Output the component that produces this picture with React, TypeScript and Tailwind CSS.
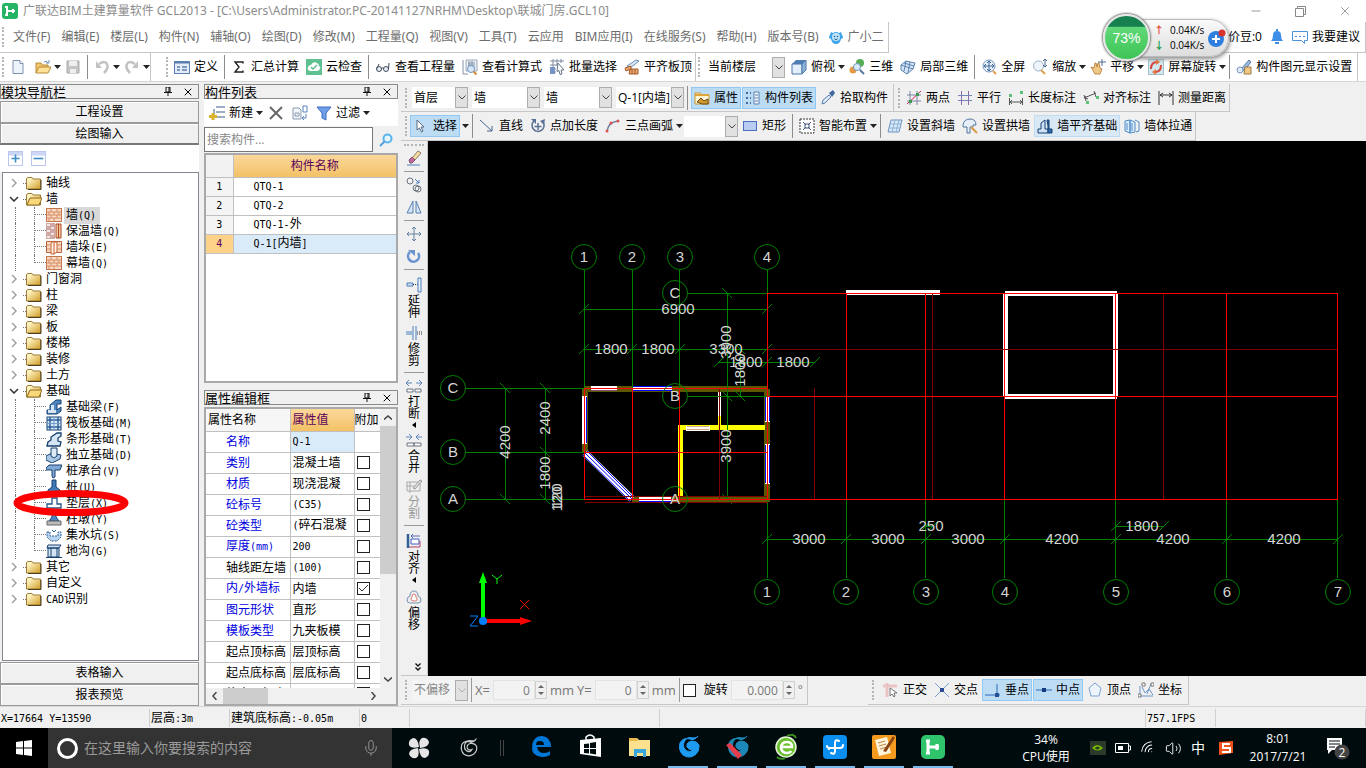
import { useState, type ReactNode } from "react";
import { Mic, Minus, X, Wifi, Volume2 } from "lucide-react";

const BLUE = "#4a7ebb";
const GRAY = "#6b7480";

// 16x16 toolbar drawings
const ICONS: Record<string, ReactNode> = {
  newFile: (
    <>
      <path d="M3 1.5h7l3 3v10H3z" fill="#eef4fb" stroke="#7f93ad" />
      <path d="M10 1.5v3h3" fill="#fff" stroke="#7f93ad" />
    </>
  ),
  open: (
    <>
      <path d="M1 14V4h5l1 2h6v3" fill="#f3c76a" stroke="#b98a35" />
      <path d="M1 14l3-6h12l-3 6z" fill="#ffe19a" stroke="#b98a35" />
      <path d="M9 3q3-2 4 1m-2 0h3V1" fill="none" stroke="#6c8db9" />
    </>
  ),
  save: (
    <>
      <path d="M2 2h12v12H2z" fill="#c4c4c4" stroke="#aaa" />
      <path d="M4 2h8v5H4zM5 10h6v4H5z" fill="#eee" />
    </>
  ),
  undo: (
    <>
      <path d="M5 5q6-4 8 0t-3 9" fill="none" stroke="#c2c2c2" strokeWidth="2.500" />
      <path d="M2 2v7h6z" fill="#c2c2c2" />
    </>
  ),
  redo: (
    <>
      <path d="M11 5Q5 1 3 5t3 9" fill="none" stroke="#c2c2c2" strokeWidth="2.500" />
      <path d="M14 2v7H8z" fill="#c2c2c2" />
    </>
  ),
  define: (
    <>
      <rect x="0.5" y="2.5" width="15" height="12" fill="#e3ecf7" stroke="#5d7fb0" />
      <path d="M1 3.5h14" stroke="#5d7fb0" strokeWidth="2" />
      <path d="M3 8h3M3 11h3M8 8h5M8 11h5" stroke="#5d7fb0" strokeWidth="1.5" />
    </>
  ),
  sigma: <path d="M12 4.5V3H4l4 5-4 5h8v-1.5" fill="none" stroke="#222" strokeWidth="1.4" />,
  cloud: (
    <>
      <rect width="16" height="16" fill="#5fc191" />
      <path d="M4 12q-3-1-2-4 1-2 3-2 2-4 6-2 2 1 2 3 2 1 1 3-1 2-3 2z" fill="#fff" />
      <path d="M5 8l2 2 4-4" fill="none" stroke="#5fc191" strokeWidth="1.5" />
    </>
  ),
  glasses: (
    <g fill="#e8eef5" stroke="#444f5e">
      <circle cx="4" cy="10" r="2.5" />
      <circle cx="11" cy="10" r="2.5" />
      <path d="M6.5 9h2M1.5 10L4 5M13.5 10L14 4" fill="none" />
    </g>
  ),
  calc: (
    <>
      <path d="M4 1h11v11H4z" fill="#e9eef5" stroke="#9aa8ba" />
      <path d="M1 1v14h5M6 4h7M6 6h7M6 8h7M7 2v8M10 2v8" stroke="#8592a6" fill="none" />
      <circle cx="9" cy="10" r="3.5" fill="#d6e8f8" stroke="#6f96c4" />
      <path d="M11.5 12.5l3 3" stroke="#d58a33" strokeWidth="2" />
    </>
  ),
  batch: (
    <>
      <path d="M1 2h14M1 6h9M4 0v10M8 0v7M12 0v4M1 10h6M1 13h6" stroke="#7c8aa0" />
      <path d="M1 8h5v7H1z" fill="#7593c4" />
      <path d="M9 4l6 7h-3l1 4-2 .5-1-4-2 1z" fill="#fff" stroke="#68768b" />
    </>
  ),
  slab: (
    <>
      <path d="M3 7L12 1l3 1-9 7z" fill="#dbe8f7" stroke="#6e8db5" />
      <path d="M1 9l6-2v3l-5 2zM6 10h8v5H5z" fill="#e7a768" stroke="#a95d32" />
      <path d="M8 10v5M11 10v5" stroke="#a95d32" />
    </>
  ),
  cube: (
    <>
      <path d="M1 5l4-4h10l-4 4z" fill="#4f7fb5" />
      <path d="M1 5h10v10H1z" fill="#e3eefa" stroke="#4d79aa" />
      <path d="M11 5l4-4v10l-4 4z" fill="#8fb2d8" stroke="#4d79aa" />
    </>
  ),
  threeD: (
    <>
      <circle cx="4" cy="11" r="3.5" fill="#e79a45" />
      <circle cx="11" cy="4" r="4" fill="#57ad52" />
      <circle cx="8" cy="8" r="3.5" fill="#d7ebfa" stroke="#7598bd" />
      <path d="M11 11l4 4" stroke="#58779f" strokeWidth="2" />
    </>
  ),
  part3d: (
    <>
      <path d="M1 6l5-4 9 2-2 6-6 5-6-4z" fill="#d6e6f6" stroke="#5b83b0" />
      <path d="M6 2L4 12M10 3L8 14M1 6l12 4M4 4l10 3" stroke="#5b83b0" fill="none" />
    </>
  ),
  full: (
    <>
      <circle cx="8" cy="7" r="6" fill="#e6f0fb" stroke="#7593bb" />
      <path d="M8 2v10M3 7h10M6 4l2-2 2 2M6 10l2 2 2-2M5 5L3 7l2 2M11 5l2 2-2 2" fill="none" stroke="#43679a" />
      <path d="M12 12l3 3" stroke="#e0a04a" strokeWidth="2" />
    </>
  ),
  zoom: (
    <>
      <circle cx="6.5" cy="7" r="5" fill="#edf4fb" stroke="#9db2cc" />
      <path d="M9 11l4 4" stroke="#dca04b" strokeWidth="2" />
      <path d="M13 0v8M11 2l2-2 2 2M11 6l2 2 2-2" fill="none" stroke="#506a90" />
    </>
  ),
  pan: (
    <>
      <path d="M1 8l3 1 1-5h1l1 4 1-4h1l1 5 2 1-2 5H5z" fill="#f0c886" stroke="#b98a4a" />
      <path d="M12 0v7M8 3h8" stroke="#536b8f" />
    </>
  ),
  rotateView: (
    <>
      <rect x="0.5" y="0.5" width="15" height="15" fill="#d3e7ee" stroke="#9ec3cf" />
      <path d="M3 10Q3 3 9 3M13 6q0 7-6 7" fill="none" stroke="#d6483b" strokeWidth="2" />
      <path d="M8 0l4 3-4 3zM8 10l-4 3 4 3z" fill="#e8743c" />
    </>
  ),
  viewSet: (
    <>
      <path d="M5 10l8-9 2 2-7 9z" fill="#9bb9df" stroke="#5a7aa5" />
      <path d="M9 8h6v7H8z" fill="#f1c77f" stroke="#9a7b45" />
      <circle cx="4" cy="11" r="3" fill="#dcebf8" stroke="#7d97b8" />
    </>
  ),
  props: (
    <>
      <path d="M1 3h5l1 2h8v9H1z" fill="#fff3d2" stroke="#c9932f" />
      <path d="M1 5h14" stroke="#e0a63a" strokeWidth="2" />
      <path d="M3 12l4-4 3 3 4-2v5H8z" fill="#d79a2a" stroke="#5a4a20" />
    </>
  ),
  list: (
    <>
      <path d="M1 3h2M1 8h2M1 13h2M5 3h1M5 8h1M5 13h1" stroke="#466a9c" strokeWidth="2" />
      <path d="M9 2h5v12H9z" fill="#f4f8fd" stroke="#5b7fb1" />
      <path d="M10 5h3M10 8h3M10 11h3" stroke="#5b7fb1" />
    </>
  ),
  picker: (
    <>
      <path d="M2 14l1-4 6-5 2 2-6 6z" fill="#d9e8f8" stroke="#5f7fab" />
      <path d="M9 3l4-3 2 3-3 4z" fill="#3f68a0" />
    </>
  ),
  twoPt: (
    <>
      <path d="M4 1v14M11 1v14M1 5h14M1 11h14" stroke="#7f86a8" />
      <path d="M1 14L15 1" stroke="#c24" />
      <path d="M3 10h3v3H3zM10 3h3v3h-3z" fill="#3a9a50" />
    </>
  ),
  parallel: (
    <>
      <path d="M4.5 1v14M11.5 1v14" stroke="#8a6aa8" />
      <path d="M1 5.5h14M1 10.5h14" stroke="#7486b8" />
    </>
  ),
  lenDim: (
    <>
      <path d="M1.500 8v7M14.500 8v7M2 12h12M4 10l-2 2 2 2M12 10l2 2-2 2" stroke="#555" fill="none" />
      <path d="M1 4h3v3H1zM12 1h3v3h-3z" fill="#5fc07a" />
    </>
  ),
  alignDim: (
    <>
      <path d="M1 8L13 3M1 5l2 6M11 1l2 6M3 6L2 8l3 1" stroke="#555" fill="none" />
      <path d="M3 11h3v3H3zM13 6h3v3h-3z" fill="#5fc07a" />
    </>
  ),
  measure: <path d="M1 1v14M15 1v14M2 5h12M5 3L2 5l3 2M11 3l3 2-3 2" stroke="#333" fill="none" />,
  cursor: <path d="M4 2v10l2.500-2 2 4 1.500-1-2-4h3z" fill="#fff" stroke="#57687f" />,
  line: <path d="M1 2l12 11M13 8v5H8" stroke="#46648f" fill="none" />,
  ptLen: (
    <>
      <path d="M4 3a6 6 0 1 0 9 1M8 5v7M4.500 8.500h7" fill="none" stroke="#5a7196" strokeWidth="1.5" />
      <path d="M1 1h5v5zM15 1l-1 6-4-4z" fill="#5a7196" />
    </>
  ),
  arc: (
    <>
      <path d="M2 14Q3 4 13 3" fill="none" stroke="#6c7f9c" strokeWidth="1.5" />
      <circle cx="2" cy="13" r="1.5" fill="#d9534f" />
      <circle cx="6" cy="5" r="1.5" fill="#d9534f" />
      <circle cx="13" cy="3" r="1.5" fill="#d9534f" />
    </>
  ),
  rect: <rect x="1.5" y="3.5" width="13" height="9" fill="#b9cdf2" stroke="#4b6fc0" />,
  smart: (
    <>
      <rect x="1" y="1" width="14" height="14" fill="#fff" stroke="#333" strokeDasharray="2 1" />
      <path d="M4 4l3 3M12 4L9 7M4 12l3-3M12 12L9 9M5 7h2V5M11 7H9V5M5 9h2v2M11 9H9v2" fill="none" stroke="#44597c" />
    </>
  ),
  slope: (
    <>
      <path d="M4 2h11l-3 12H1z" fill="#d9e9f8" stroke="#6a93c2" />
      <path d="M3 6h11M2 10h11M8 2L5 14M12 2L9 14" stroke="#8fb0d6" />
    </>
  ),
  arch: (
    <>
      <path d="M1 7q1-6 7-6t6 6h-3v2H8v6H5V9H1z" fill="#e6eef8" stroke="#55779f" />
      <path d="M9 9l6 6" stroke="#d99b4b" strokeWidth="2" />
    </>
  ),
  alignBase: (
    <>
      <path d="M1 15v-4h3V5l4-3v9h3v4z" fill="#cfe1f4" stroke="#173f73" />
      <path d="M10 2h2v9h3v4h-4V8z" fill="#2f6bab" stroke="#173f73" />
    </>
  ),
  through: (
    <>
      <path d="M1 3l5-1v13l-5-2zM6 2l5 2v10l-5 1z" fill="#dcebfa" stroke="#4f8cc7" />
      <path d="M11 2l4 2v9l-3 1M3 5v7M8 5v8" stroke="#4f8cc7" fill="none" />
    </>
  ),
  eraser: (
    <>
      <path d="M6 8l6-7 3 2-6 7z" fill="#f6dca2" stroke="#8b7a63" />
      <path d="M3 10l3-3 3 3-3 3H4z" fill="#c46a9a" stroke="#7a4f70" />
      <path d="M1 15h13" stroke={BLUE} />
    </>
  ),
  copy: (
    <g fill="none" stroke={GRAY}>
      <circle cx="4" cy="4" r="3" />
      <circle cx="10" cy="11" r="3" />
      <circle cx="12" cy="12" r="3" />
      <path d="M9 2l4 4M13 3v3h-3" stroke={BLUE} />
    </g>
  ),
  mirror: <path d="M7 2v12H1zM10 2v12h5z" fill="#d8e6f6" stroke="#5580b3" />,
  move: <path d="M8 1v14M1 8h14M6 3l2-2 2 2M6 13l2 2 2-2M3 6L1 8l2 2M13 6l2 2-2 2" fill="none" stroke="#66809f" />,
  rotate: (
    <>
      <path d="M4 4a5.500 5.500 0 1 0 8 1" fill="none" stroke="#6a94d0" strokeWidth="2.5" />
      <path d="M2 2h7v6z" fill="#6a94d0" />
    </>
  ),
  extend: (
    <>
      <path d="M1 6h6v3H1z" fill="#cfe0f3" stroke={BLUE} />
      <path d="M7 7.500h5" stroke="#333" strokeDasharray="1 1" />
      <path d="M12 1h3v14h-3z" fill="#e8f1fb" stroke={BLUE} />
    </>
  ),
  trim: (
    <>
      <path d="M0 7h6M0 9h6M7 1v14M10 1v14" stroke={BLUE} />
      <path d="M11 7h5M11 9h5" stroke="#333" strokeDasharray="1 1" />
    </>
  ),
  breakOp: (
    <>
      <path d="M0 5h6M3 2L0 5l3 3M16 5h-6M13 2l3 3-3 3" stroke="#5f86bb" fill="none" />
      <path d="M1 11h6v3H1zM9 11h6v3H9z" fill="#fff" stroke={GRAY} />
    </>
  ),
  merge: (
    <>
      <path d="M0 5h6M3 2l3 3-3 3M16 5h-6M13 2l-3 3 3 3" stroke="#5f86bb" fill="none" />
      <path d="M1 11h7v3H1zM8 11h7v3H8z" fill="#fff" stroke={GRAY} />
    </>
  ),
  split: (
    <>
      <path d="M1 4h13v9H1zM0 8h8M4 4v11" stroke="#aaa" fill="none" />
      <path d="M7 10l7-8 2 1-7 8z" fill="#ddd" stroke="#999" />
    </>
  ),
  align: (
    <>
      <path d="M2 1v14" stroke="#315f96" strokeWidth="2.5" />
      <path d="M5 6h8v5H5z" fill="#fff" stroke="#3c5fc0" />
      <path d="M3 14h11V8" fill="none" stroke="#b5436b" />
      <path d="M5 3h9M7 1L5 3l2 2" fill="none" stroke="#5a6ab8" />
    </>
  ),
  offset: (
    <>
      <path d="M1 11q0-3 3-4 0-5 4-5t4 5q3 1 3 4 0 3-3 3H4q-3 0-3-3z" fill="#e9edf2" stroke="#7e93ad" />
      <path d="M5 10q0-1 1-2 0-3 2-3t2 3q1 1 1 3-1 1-3 1-3 0-3-2z" fill="#fff" stroke="#e07a72" />
    </>
  ),
  ortho: (
    <>
      <path d="M0 4h14M4 1v14" stroke="#ecc3c3" strokeWidth="3" />
      <path d="M7 6v8l2-2 2 3 1-1-1-3h3z" fill="#fff" stroke="#777" />
    </>
  ),
  cross: (
    <>
      <path d="M1 1l14 14M15 1L1 15" stroke="#7aa3d8" />
      <path d="M6 6h4v4H6z" fill="#274f91" />
    </>
  ),
  perp: (
    <>
      <path d="M0 13h15M12 2v11" stroke="#5b8fd0" strokeWidth="1.5" />
      <path d="M10 11h4v4h-4z" fill="#274f91" />
    </>
  ),
  mid: (
    <>
      <path d="M0 8h16" stroke="#5b8fd0" strokeWidth="1.5" />
      <path d="M6 6h4v4H6z" fill="#173b80" />
    </>
  ),
  vertex: <path d="M8 1l6 5-2 8H4L2 6z" fill="#eef4fb" stroke="#7ba2d2" />,
  coord: (
    <>
      <path d="M2 4v10h13M4 5l3 6 4-4 4 6M13 2L9 12" fill="none" stroke="#6a95cb" />
      <path d="M0 12h3v3H0zM4 1h3v3H4zM13 1h3v3h-3z" fill="#fff" stroke="#777" />
    </>
  ),
  addItem: (
    <>
      <path d="M7 2h9M7 7h9M7 12h9M5 4v8" stroke="#7e95b5" strokeWidth="1.5" />
      <path d="M4 8v7M0 11.500h8" stroke="#d9b52e" strokeWidth="3" />
    </>
  ),
  del: <path d="M2 2l12 12M14 2L2 14" stroke="#666" strokeWidth="2" />,
  copyDoc: (
    <>
      <path d="M1 3h6l2 2v9H1z" fill="#f3f6fa" stroke="#8a9ab0" />
      <path d="M3 8h4v3H3z" fill="none" stroke="#8a9ab0" />
      <path d="M11 1h4v6h-4zM14 9v4h-3M12 11l-2 2 2 2" fill="none" stroke="#5980c0" />
    </>
  ),
  filter: <path d="M1 2h14l-5 6v7l-4-2V8z" fill="#6f9fe6" stroke="#3f6fc0" />,
  brick: (
    <>
      <rect x="0.5" y="1.5" width="15" height="13" fill="#f8d9c3" stroke="#c5764b" />
      <path d="M1 5h14M1 8h14M1 11h14M5 2v3M11 2v3M3 5v3M8 5v3M13 5v3M5 8v3M11 8v3M3 11v3M8 11v3" stroke="#d48b60" />
    </>
  ),
  insul: (
    <>
      <rect width="9" height="16" fill="#cfa9a6" />
      <path d="M1 2h3M5 5h3M1 8h3M5 11h3M1 14h3" stroke="#f2e4e4" strokeWidth="2" />
      <path d="M10 1h5v14h-5z" fill="#f3c7a6" stroke="#a84a20" />
      <path d="M12.500 1v14" stroke="#a84a20" />
    </>
  ),
  pier: (
    <>
      <path d="M.5 2.500h15v11H.5z" fill="#f8d9c3" stroke="#b9623a" />
      <path d="M5 4l3-2v13H5zM8 3h3v10l-3 2" fill="#fff3ea" stroke="#c5622d" />
      <path d="M1 6h4M1 10h4M11 6h4M11 10h4" stroke="#d48b60" />
    </>
  ),
  beam: (
    <>
      <path d="M1 15v-4h3V6l6-5h5v4h-4v6l4-3v4l-4 3z" fill="#4f86bf" stroke="#17406f" />
      <path d="M2 14v-3h3V6h3v5h2v3z" fill="#d6e6f5" />
    </>
  ),
  raft: (
    <>
      <rect x="1" y="2" width="14" height="13" fill="#d9e8f6" stroke="#17406f" />
      <path d="M4 2v13M12 2v13M1 5h14M1 12h14" stroke="#2b5f9a" strokeWidth="1.5" />
      <path d="M8 2v13M1 8.500h14" stroke="#6f9ac6" />
    </>
  ),
  strip: <path d="M1 15l1-4 3-2V6l6-4h4v3l-3 2v3l3 1-1 4z" fill="#d6e6f5" stroke="#17406f" strokeWidth="1.3" />,
  isolated: (
    <>
      <path d="M0 9l6-3 9 2-1 4-8 4-6-3z" fill="#a9c6e4" stroke="#17406f" />
      <path d="M5 9V1h6v8l-3 2z" fill="#dce9f6" stroke="#17406f" />
    </>
  ),
  cap: <path d="M0 5l3-3h13l-2 5H9v7l-2 1-1-2V7H0z" fill="#7fa9d4" stroke="#17406f" />,
  pile: <path d="M6 1h4v7l4 3v2l-6 2-6-2v-2l4-3z" fill="#3f7ab5" stroke="#17406f" />,
  cushion: <path d="M6 3h5v6h4v4H1V9h5z" fill="#fff" stroke="#235488" strokeWidth="1.3" />,
  colPier: (
    <>
      <path d="M6 1h4v5l3 4H3l3-4z" fill="#4f86bf" stroke="#17406f" />
      <path d="M1 10h14v4H1z" fill="#bbb" stroke="#666" />
    </>
  ),
  pit: (
    <>
      <path d="M1 5h3v4h8V5h3v5l-4 4H5l-4-4z" fill="#b9d5ef" stroke="#2c6099" strokeDasharray="2 1" />
      <path d="M6 3l2 2 2-2" fill="none" stroke="#2c6099" />
    </>
  ),
  trench: (
    <>
      <path d="M2 2h13l-2 3H1zM2 5h11v9H2z" fill="#d4e4f4" stroke="#17406f" />
      <path d="M5 5v9M11 5v9M0 14.500h16" stroke="#17406f" />
    </>
  ),
};

const Icon = ({ name }: { name: string }) => (
  <svg viewBox="0 0 16 16" className="size-4 shrink-0" aria-hidden="true">
    {ICONS[name]}
  </svg>
);

const Arrow = () => (
  <svg viewBox="0 0 7 4" className="ml-[3px] h-1 w-[7px] shrink-0" aria-hidden="true">
    <path d="M0 0h7L3.5 4z" fill="#222" />
  </svg>
);

const Grip = () => <span className="mx-0.5 h-5 w-0.5 shrink-0 border-l-2 border-dotted border-[#b5b5b5]" />;
const Sep = () => <span className="mx-0.5 h-6 w-px shrink-0 bg-[#8c8c8c]" />;

type ToolProps = { icon: string; label?: string; arrow?: boolean; active?: boolean; pale?: boolean };

function Tool({ icon, label, arrow, active, pale }: ToolProps) {
  const tone = active
    ? "border-[#90c8f6] bg-[#bcdcf4]"
    : pale
      ? "border-[#c0dcf3] bg-[#d8e8f5]"
      : "border-transparent";
  return (
    <>
      <button
        type="button"
        aria-label={label ?? icon}
        className={`flex h-[22px] shrink-0 items-center gap-1 whitespace-nowrap border pl-0.5 ${arrow && !active ? "pr-0 border-r-0" : "pr-0.5"} ${tone}`}
      >
        <Icon name={icon} />
        {label}
        {arrow && !active && <span className="-ml-1"><Arrow /></span>}
      </button>
      {arrow && active && <span className="-ml-0.5"><Arrow /></span>}
    </>
  );
}

// Latin runs in these panels use a half-width monospaced face
function Mono({ text }: { text: string }) {
  return (
    <>
      {text.split(/([\x20-\x7e]+)/).map((run, i) =>
        i % 2 ? (
          <span key={i} className="whitespace-pre font-[family-name:'DejaVu_Sans_Mono',monospace] text-[10px]">
            {run}
          </span>
        ) : (
          run
        ),
      )}
    </>
  );
}

function Combo({ value, label, width, disabled }: { value: string; label: string; width: string; disabled?: boolean }) {
  return (
    <span className={`flex h-[21px] shrink-0 ${width} ${disabled ? "bg-[#f4f4f4] text-[#888]" : "bg-white"}`}>
      <select
        aria-label={label}
        disabled={disabled}
        className="min-w-0 flex-1 appearance-none overflow-hidden bg-transparent pl-0.5 outline-none"
      >
        <option>{value}</option>
      </select>
      <span className="flex w-[13px] items-center justify-center border border-[#adadad] bg-[#e1e1e1]">
        <svg viewBox="0 0 8 5" className="h-[5px] w-2">
          <path d="M.5 .5L4 4 7.5 .5" fill="none" stroke={disabled ? "#aaa" : "#444"} />
        </svg>
      </span>
    </span>
  );
}

function Spin({ value, label, width }: { value: string; label: string; width: string }) {
  return (
    <span className="flex h-5 items-center">
      <input
        aria-label={label}
        defaultValue={value}
        disabled
        className={`h-5 border border-[#e3e3e3] bg-[#f3f3f3] pr-1 text-right text-[#777] ${width}`}
      />
      <span className="flex h-[18px] w-3 flex-col items-center justify-center gap-1 border border-[#d0d0d0]">
        <svg viewBox="0 0 6 3" className="h-[3px] w-1.5"><path d="M0 3h6L3 0z" fill="#666" /></svg>
        <svg viewBox="0 0 6 3" className="h-[3px] w-1.5"><path d="M0 0h6L3 3z" fill="#666" /></svg>
      </span>
    </span>
  );
}

function PanelHead({ title }: { title: string }) {
  return (
    <div className="flex h-[15px] shrink-0 items-center justify-between border border-[#8a8a8a] pr-1 text-[13px] leading-3 text-black">
      <h2>{title}</h2>
      <span className="flex items-center gap-2.5">
        <svg viewBox="0 0 8 9" className="h-[9px] w-2">
          <path d="M2 0h4v5H2zM0 5.500h8M4 6v3" fill="none" stroke="#111" />
          <path d="M5 0v5" stroke="#111" />
        </svg>
        <X className="size-3" strokeWidth={2} />
      </span>
    </div>
  );
}

const MENU = ["文件(F)", "编辑(E)", "楼层(L)", "构件(N)", "辅轴(O)", "绘图(D)", "修改(M)", "工程量(Q)", "视图(V)", "工具(T)", "云应用", "BIM应用(I)", "在线服务(S)", "帮助(H)", "版本号(B)"];

type Node = { name: string; children?: [string, string][] };

const TREE: Node[] = [
  { name: "轴线" },
  { name: "墙", children: [["brick", "墙(Q)"], ["insul", "保温墙(Q)"], ["pier", "墙垛(E)"], ["brick", "幕墙(Q)"]] },
  { name: "门窗洞" },
  { name: "柱" },
  { name: "梁" },
  { name: "板" },
  { name: "楼梯" },
  { name: "装修" },
  { name: "土方" },
  {
    name: "基础",
    children: [
      ["beam", "基础梁(F)"], ["raft", "筏板基础(M)"], ["strip", "条形基础(T)"], ["isolated", "独立基础(D)"], ["cap", "桩承台(V)"],
      ["pile", "桩(U)"], ["cushion", "垫层(X)"], ["colPier", "柱墩(Y)"], ["pit", "集水坑(S)"], ["trench", "地沟(G)"],
    ],
  },
  { name: "其它" },
  { name: "自定义" },
  { name: "CAD识别" },
];

function Folder({ open }: { open?: boolean }) {
  return (
    <svg viewBox="0 0 16 13" className="h-[13px] w-4 shrink-0">
      <defs>
        <linearGradient id="folderFill" x2="1" y2="1">
          <stop offset="0.2" stopColor="#fff3bf" />
          <stop offset="1" stopColor="#cf9a22" />
        </linearGradient>
      </defs>
      <path d="M.5 12V1.500L2 .5h4l1 1.500h7.500v10z" fill="url(#folderFill)" stroke="#9c7b35" />
      {open ? (
        <path d="M1 12l3-7h12l-3 7z" fill="#f8d878" stroke="#8f6e27" />
      ) : (
        <path d="M2 12.500h13V3" fill="none" stroke="#4d3f20" />
      )}
    </svg>
  );
}

function Tree() {
  return (
    <ul className="ml-0.5 min-h-0 flex-1 overflow-hidden border border-[#828790] bg-white pt-0.5 leading-4">
      {TREE.map((node) => (
        <li key={node.name}>
          <div className="flex h-4 items-center">
            <span className="flex w-[20px] justify-end pr-0.5">
              {node.children ? (
                <svg viewBox="0 0 10 6" className="mr-0.5 h-1.5 w-2.5"><path d="M1 1l4 4 4-4" fill="none" stroke="#333" strokeWidth="1.5" /></svg>
              ) : (
                <svg viewBox="0 0 6 10" className="mr-1 h-2.5 w-1.5"><path d="M1 1l4 4-4 4" fill="none" stroke="#a0a0a0" strokeWidth="1.5" /></svg>
              )}
            </span>
            <span className="w-[3px] border-t border-dotted border-[#777]" />
            <Folder open={!!node.children} />
            <span className="pl-1"><Mono text={node.name} /></span>
          </div>
          {node.children?.map(([icon, name], i, all) => (
            <div key={name} className="relative flex h-4 items-center">
              <span className="w-3 shrink-0" />
              <span className="h-4 w-[19px] shrink-0 border-l border-dotted border-[#777]" />
              <span className={`w-3 shrink-0 self-start border-l border-dotted border-[#777] ${i === all.length - 1 ? "h-2" : "h-4"}`}>
                <span className="block h-2 border-b border-dotted border-[#777]" />
              </span>
              <Icon name={icon} />
              <span className={`ml-0.5 pl-0.5 pr-1 ${name === "墙(Q)" ? "bg-[#d9d9d9]" : ""}`}>
                <Mono text={name} />
              </span>
              {name === "垫层(X)" && (
                <svg viewBox="0 0 116 28" className="absolute -top-1.5 left-2.5 z-10 h-7 w-[116px]">
                  <ellipse cx="58" cy="14" rx="54" ry="9.5" fill="none" stroke="red" strokeWidth="7" />
                </svg>
              )}
            </div>
          ))}
        </li>
      ))}
    </ul>
  );
}

const NAV_BTN = "h-[22px] shrink-0 border border-[#9a9a9a] bg-[#f0f0f0] leading-4 text-black shadow-[inset_1px_1px_0_#fff]";

function ModulePanel() {
  return (
    <aside className="flex w-[199px] shrink-0 flex-col">
      <PanelHead title="模块导航栏" />
      <nav className="mt-0.5 flex min-h-0 flex-1 flex-col">
        <button type="button" className={NAV_BTN}>工程设置</button>
        <button type="button" className={`${NAV_BTN} border-b-2 border-b-[#777]`}>绘图输入</button>
        <div className="flex h-[27px] shrink-0 items-center gap-2 bg-white pl-2">
          {["M3 8h10M8 3v10", "M2 8h12"].map((d) => (
            <button type="button" key={d} aria-label="展开折叠" className="size-[15px] border border-[#b9c6ee] bg-[linear-gradient(#ccd6f7_25%,#fff_30%)]">
              <svg viewBox="0 0 16 16"><path d={d} stroke="#3d8cc4" strokeWidth="2" /></svg>
            </button>
          ))}
        </div>
        <Tree />
        <button type="button" className={`${NAV_BTN} mt-px`}>表格输入</button>
        <button type="button" className={NAV_BTN}>报表预览</button>
      </nav>
    </aside>
  );
}

const PARTS = ["QTQ-1", "QTQ-2", "QTQ-1-外", "Q-1[内墙]"];

const PROPS: [string, string, boolean][] = [
  ["名称", "Q-1", true],
  ["类别", "混凝土墙", true],
  ["材质", "现浇混凝", true],
  ["砼标号", "(C35)", true],
  ["砼类型", "(碎石混凝", true],
  ["厚度(mm)", "200", true],
  ["轴线距左墙", "(100)", false],
  ["内/外墙标", "内墙", true],
  ["图元形状", "直形", true],
  ["模板类型", "九夹板模", true],
  ["起点顶标高", "层顶标高", false],
  ["起点底标高", "层底标高", false],
  ["终点顶标高", "", false],
];

function PartPanel() {
  const [picked, setPicked] = useState(3);
  const [checked, setChecked] = useState<Record<string, boolean>>({ "内/外墙标": true });
  return (
    <aside className="flex w-[194px] shrink-0 flex-col">
      <PanelHead title="构件列表" />
      <div className="flex h-[27px] shrink-0 items-center gap-0.5 bg-white pl-0.5">
        <Tool icon="addItem" label="新建" arrow />
        <Tool icon="del" />
        <Tool icon="copyDoc" />
        <Tool icon="filter" label="过滤" arrow />
      </div>
      <div className="flex h-[27px] shrink-0 items-center">
        <input aria-label="搜索构件" placeholder="搜索构件..." className="h-[25px] w-[169px] border border-[#777] bg-white px-0.5 text-[12px] placeholder:text-[#888]" />
        <button type="button" aria-label="搜索" className="flex flex-1 justify-center">
          <svg viewBox="0 0 14 14" className="size-3.5">
            <circle cx="8.5" cy="5.5" r="4" fill="#e8f6ff" stroke="#58b4ee" strokeWidth="2" />
            <path d="M5.500 8.500L1 13" stroke="#58a0d8" strokeWidth="2" />
          </svg>
        </button>
      </div>
      <div className="h-[230px] shrink-0 border-2 border-[#a9a9a9] bg-white">
        <table className="w-full border-collapse">
          <thead>
            <tr className="h-[22px]">
              <th className="w-[27px] border-b border-r border-[#c0c0c0] bg-[#f2f2f2]" />
              <th className="border-b border-[#c0c0c0] bg-[linear-gradient(#fad79a,#f3c165)] font-normal text-[#5b005b]">构件名称</th>
            </tr>
          </thead>
          <tbody>
            {PARTS.map((part, i) => (
              <tr key={part} onClick={() => setPicked(i)} className="h-[19px]">
                <td className={`border-b border-r border-[#c0c0c0] text-center leading-4 ${i === picked ? "bg-[#fdd38a] text-[#5b005b]" : "bg-[#f4f4f4]"}`}>
                  <Mono text={String(i + 1)} />
                </td>
                <td className={`border-b border-[#c0c0c0] pl-5 leading-4 ${i === picked ? "bg-[#d9eaf8]" : ""}`}>
                  <Mono text={part} />
                </td>
              </tr>
            ))}
          </tbody>
        </table>
      </div>
      <div className="mt-[7px] flex min-h-0 flex-1 flex-col">
        <PanelHead title="属性编辑框" />
        <div className="mt-0.5 flex min-h-0 flex-1 flex-col border-2 border-[#a9a9a9] bg-white">
          <div className="flex min-h-0 flex-1">
            <div className="min-w-0 flex-1 overflow-hidden">
              <table className="w-full table-fixed border-collapse whitespace-nowrap">
                <thead>
                  <tr className="h-[22px] text-left">
                    <th className="w-[84px] border-b border-r border-[#c0c0c0] bg-[#f6f6f6] pl-0.5 font-normal">属性名称</th>
                    <th className="w-[64px] border-b border-r border-[#c0c0c0] bg-[linear-gradient(#fad79a,#f3c165)] pl-0.5 font-normal text-[#5b005b]">属性值</th>
                    <th className="overflow-hidden border-b border-[#c0c0c0] bg-[#f6f6f6] font-normal">附加</th>
                  </tr>
                </thead>
                <tbody>
                  {PROPS.map(([name, value, blue]) => (
                    <tr key={name} className="h-[21px]">
                      <td className={`border-b border-r border-[#c0c0c0] pl-5 leading-4 ${blue ? "text-[#0000e0]" : ""}`}>
                        <Mono text={name} />
                      </td>
                      <td className={`border-b border-r border-[#c0c0c0] pl-0.5 leading-4 ${name === "名称" ? "bg-[#d9eaf8]" : ""}`}>
                        <Mono text={value} />
                      </td>
                      <td className="border-b border-[#c0c0c0] pl-0.5">
                        {name !== "名称" && (
                          <label className="block size-[13px] border border-[#222] bg-white">
                            <input
                              type="checkbox"
                              aria-label={name}
                              checked={!!checked[name]}
                              onChange={(e) => setChecked({ ...checked, [name]: e.target.checked })}
                              className="peer sr-only"
                            />
                            <svg viewBox="0 0 11 11" className="hidden size-[11px] peer-checked:block">
                              <path d="M1 5l3 3 6-6" fill="none" stroke="#333" />
                            </svg>
                          </label>
                        )}
                      </td>
                    </tr>
                  ))}
                </tbody>
              </table>
            </div>
            <div className="flex w-4 flex-col items-center bg-[#f0f0f0]">
              <svg viewBox="0 0 8 5" className="my-1.5 h-[5px] w-2"><path d="M0 4.500L4 1l4 3.500" fill="none" stroke="#444" strokeWidth="1.5" /></svg>
              <span className="h-[148px] w-4 bg-[#cdcdcd]" />
              <svg viewBox="0 0 8 5" className="mt-auto mb-1.5 h-[5px] w-2"><path d="M0 .5L4 4 8 .5" fill="none" stroke="#444" strokeWidth="1.5" /></svg>
            </div>
          </div>
          <div className="flex h-4 shrink-0 items-center bg-[#f0f0f0] pr-5">
            <svg viewBox="0 0 5 8" className="mx-1.5 h-2 w-[5px]"><path d="M4.500 0L1 4l3.500 4" fill="none" stroke="#444" strokeWidth="1.5" /></svg>
            <span className="h-4 w-[45px] bg-[#cdcdcd]" />
            <svg viewBox="0 0 5 8" className="ml-auto h-2 w-[5px]"><path d="M.5 0L4 4 .5 8" fill="none" stroke="#444" strokeWidth="1.5" /></svg>
          </div>
        </div>
      </div>
    </aside>
  );
}

function SideTool({ icon, label, arrow, muted }: { icon: string; label?: string; arrow?: boolean; muted?: boolean }) {
  return (
    <button type="button" aria-label={label ?? icon} className={`flex w-full flex-col items-center ${muted ? "text-[#999]" : ""}`}>
      <Icon name={icon} />
      {label && (
        <span className="mt-0.5 w-3 text-[12px] leading-3 break-all">{label}</span>
      )}
      {arrow && <svg viewBox="0 0 4 6" className="mt-0.5 h-1.5 w-1"><path d="M4 0v6L0 3z" /></svg>}
    </button>
  );
}

const SideSep = () => <span className="my-[5px] h-px w-5 shrink-0 bg-[#999]" />;

const Bubble = ({ x, y, t }: { x: number; y: number; t: string }) => (
  <g>
    <circle cx={x} cy={y} r="12.5" fill="none" stroke="#008000" />
    <text x={x} y={y + 5} textAnchor="middle">{t}</text>
  </g>
);

const Dim = ({ x, y, t, up }: { x: number; y: number; t: string; up?: boolean }) => (
  <text x={x} y={y + 5} textAnchor="middle" transform={up ? `rotate(-90 ${x} ${y})` : undefined}>
    {t}
  </text>
);

// slash through each dimension end; "back" slashes lean the other way
const ticks = (points: number[][], back = false) =>
  points.map(([x, y]) => (back ? `M${x - 5} ${y - 5}l10 10` : `M${x - 5} ${y + 5}l10 -10`)).join("");

function Drawing() {
  return (
    <svg
      viewBox="428 141 938 535"
      preserveAspectRatio="xMinYMin meet"
      className="min-h-0 min-w-0 flex-1 bg-black font-[family-name:'Liberation_Sans',Arial,sans-serif] text-[15px]"
      fill="#d6d6d6"
    >
      <g shapeRendering="crispEdges" fill="none">
        {/* walls */}
        <path d="M584 388.500h184M585 388v64M767 389v113M632 499.500h136" stroke="#5c5800" strokeWidth="6" />
        <path d="M680 497v-69.500h85" stroke="#ff0" strokeWidth="5" />
        <path d="M719.500 392v34" stroke="#ff0" strokeWidth="3" />
        <path d="M591 388.500h26M633 388.500h39M584.500 396v48M767.500 396v26M767.500 444v40M639 499.500h32M686 428h24" stroke="#fff" strokeWidth="5" />
        <path d="M719.500 392v24" stroke="#fff" strokeWidth="3" />
        <path d="M633 386.500h39M633 390.500h39M586.500 397v46M765.500 397v24M769.500 397v24M765.500 445v38M769.500 445v38M639 501.500h32" stroke="#00f" />
        <path d="M591 390.500h26" stroke="#805080" />
        <path d="M687 426.500h22M687 429.500h22" stroke="#d9a878" />
        {/* green axes and dimension lines */}
        <path
          d="M584.500 270v230M632.500 270v119M679.500 270v119M767.500 270v308M466 388.500h119M466 452.500h119M466 499.500h214M688 293.500h80M688 396.500h80
             M584 309.500h184M584 349.500h184M719 362.500h96M727.500 293v207M740.500 349v48M505.500 388v112M545.500 388v112
             M846.500 499v79M925.500 499v79M1004.500 499v79M1115.500 499v79M1226.500 499v79M1337.500 499v79M767 539.500h571M1116 526.500h48M926 526.500h8"
          stroke="#008000"
        />
      </g>
      <path
        d={
          ticks([[584, 309], [767, 309], [584, 349], [632, 349], [680, 349], [767, 349], [719, 362], [767, 362], [815, 362], [767, 539], [846, 539], [926, 539], [1005, 539], [1116, 539], [1227, 539], [1338, 539], [1116, 526], [1164, 526], [926, 526], [933, 526]]) +
          ticks([[505, 388], [505, 499], [545, 388], [545, 452], [545, 499], [727, 293], [727, 396], [727, 499], [740, 349], [740, 396]], true)
        }
        stroke="#008000"
        fill="none"
      />
      <path d="M585 453l47 46" stroke="#fff" strokeWidth="7" />
      <path d="M587 451l46 46M583 455l47 46M585 453l47 46" stroke="#00f" />
      <g shapeRendering="crispEdges" fill="none">
        <path d="M846 292.500h94M1005 293.500h112M1005 396.500h112" stroke="#fff" strokeWidth="5" />
        <path d="M1005.500 293v104M1115.500 293v104" stroke="#fff" strokeWidth="5" />
        <path d="M719.500 388v112M814.500 388v112M932.500 293v207M1163.500 293v207M768 349.500h570M585 496.500h183M585 502.500h183" stroke="#800000" />
        <path
          d="M584.500 388.500h183M584.500 388v112M632.500 388v112M679.500 388v112M584 452.500h184M584 499.500h754M767.500 293v207M768 293.500h570M768 396.500h570
             M846.500 293v207M925.500 293v207M1004.500 293v207M1115.500 293v207M1226.500 293v207M1337.500 293v207"
          stroke="red"
        />
      </g>
      {["1", "2", "3", "4"].map((t, i) => <Bubble key={t} t={t} x={[584, 632, 680, 767][i]} y={257} />)}
      {["C", "B", "A"].map((t, i) => <Bubble key={t} t={t} x={453} y={[388, 452, 499][i]} />)}
      {["C", "B", "A"].map((t, i) => <Bubble key={t} t={t} x={675} y={[293, 396, 499][i]} />)}
      {["1", "2", "3", "4", "5", "6", "7"].map((t, i) => <Bubble key={t} t={t} x={[767, 846, 926, 1005, 1116, 1227, 1338][i]} y={592} />)}
      <Dim x={678} y={309} t="6900" />
      <Dim x={611} y={349} t="1800" />
      <Dim x={658} y={349} t="1800" />
      <Dim x={726} y={349} t="3300" />
      <Dim x={746} y={362} t="1800" />
      <Dim x={793} y={362} t="1800" />
      <Dim x={809} y={539} t="3000" />
      <Dim x={888} y={539} t="3000" />
      <Dim x={968} y={539} t="3000" />
      <Dim x={931} y={526} t="250" />
      <Dim x={1062} y={539} t="4200" />
      <Dim x={1142} y={526} t="1800" />
      <Dim x={1173} y={539} t="4200" />
      <Dim x={1284} y={539} t="4200" />
      <Dim x={726} y={342} t="3900" up />
      <Dim x={740} y={370} t="1800" up />
      <Dim x={726} y={446} t="3900" up />
      <Dim x={505} y={442} t="4200" up />
      <Dim x={545} y={418} t="2400" up />
      <Dim x={545} y={473} t="1800" up />
      <Dim x={557} y={496} t="120" up />
      <Dim x={557} y={499} t="120" up />
      {/* UCS marker */}
      <path d="M483 621v-40" stroke="#0f0" strokeWidth="4" />
      <path d="M479 583l4-11 4 11z" fill="#0f0" />
      <path d="M492 575l5 4 5-4M497 579v5" stroke="#0f0" fill="none" />
      <path d="M483 621h38" stroke="red" strokeWidth="4" />
      <path d="M520 617l12 4-12 4z" fill="red" />
      <path d="M520 600l9 9M529 600l-9 9" stroke="red" shapeRendering="crispEdges" />
      <path d="M470 616h8l-8 10h8" stroke="#0080ff" fill="none" />
      <circle cx="483" cy="621" r="4" fill="#0080ff" />
    </svg>
  );
}

const BAR = "flex shrink-0 items-center border-b border-r border-[#c6c6c6] pl-0.5";

function Workspace() {
  return (
    <main className="flex min-w-0 flex-1 flex-col">
      <div className="flex h-7 shrink-0">
        <div className={`${BAR} gap-px`}>
          <Grip />
          <span className="w-px" />
          <Combo label="楼层" value="首层" width="w-14" />
          <span className="w-0.5" />
          <Combo label="构件类别" value="墙" width="w-[68px]" />
          <span className="w-0.5" />
          <Combo label="构件类型" value="墙" width="w-[68px]" />
          <span className="w-0.5" />
          <Combo label="构件" value="Q-1[内墙]" width="w-[68px]" />
          <Sep />
          <Tool icon="props" label="属性" active />
          <Tool icon="list" label="构件列表" active />
          <Tool icon="picker" label="拾取构件" />
          <span className="w-px" />
        </div>
        <div className={`${BAR} gap-px`}>
          <Grip />
          <Tool icon="twoPt" label="两点" />
          <Tool icon="parallel" label="平行" />
          <Tool icon="lenDim" label="长度标注" />
          <Tool icon="alignDim" label="对齐标注" />
          <Tool icon="measure" label="测量距离" />
        </div>
      </div>
      <div className="flex h-[29px] shrink-0">
        <div className={`${BAR} gap-px`}>
          <Grip />
          <Tool icon="cursor" label="选择" active arrow />
          <Sep />
          <Tool icon="line" label="直线" />
          <Tool icon="ptLen" label="点加长度" />
          <Tool icon="arc" label="三点画弧" arrow />
          <Combo label="画弧方式" value="" width="w-[54px]" />
          <Tool icon="rect" label="矩形" />
          <Sep />
          <Tool icon="smart" label="智能布置" arrow />
          <Sep />
          <Tool icon="slope" label="设置斜墙" />
          <Tool icon="arch" label="设置拱墙" />
          <Tool icon="alignBase" label="墙平齐基础" pale />
          <Tool icon="through" label="墙体拉通" />
        </div>
      </div>
      <div className="flex min-h-0 flex-1">
        <div className="flex w-[27px] shrink-0 flex-col items-center border-b border-r border-[#c6c6c6] pt-[3px]">
          <span className="mb-1 w-5 border-t-2 border-dotted border-[#b5b5b5]" />
          <SideTool icon="eraser" />
          <SideSep />
          <div className="flex flex-col gap-1.5">
            <SideTool icon="copy" />
            <SideTool icon="mirror" />
          </div>
          <SideSep />
          <div className="flex flex-col gap-1.5">
            <SideTool icon="move" />
            <SideTool icon="rotate" />
          </div>
          <SideSep />
          <div className="mt-0.5 flex flex-col gap-1.5">
            <SideTool icon="extend" label="延伸" />
            <SideTool icon="trim" label="修剪" />
          </div>
          <SideSep />
          <div className="flex flex-col gap-1">
            <SideTool icon="breakOp" label="打断" arrow />
            <SideTool icon="merge" label="合并" />
            <SideTool icon="split" label="分割" muted />
          </div>
          <SideSep />
          <div className="mt-0.5 flex flex-col gap-1.5">
            <SideTool icon="align" label="对齐" arrow />
            <SideTool icon="offset" label="偏移" />
          </div>
          <svg viewBox="0 0 6 8" className="mt-auto mb-1 ml-2 h-2 w-1.5">
            <path d="M.5 .5L3 3 5.5 .5M.5 4.500L3 7l2.500-2.500" fill="none" stroke="#111" strokeWidth="1.3" />
          </svg>
        </div>
        <Drawing />
      </div>
      <div className="flex h-[30px] shrink-0 pb-px">
        <div className={`${BAR} gap-[3px] text-[#777]`}>
          <Grip />
          <Combo label="偏移方式" value="不偏移" width="w-14" disabled />
          <span className="h-6 w-px bg-[#999]" />
          <span className="text-[13px]">X=</span>
          <Spin label="X" value="0" width="w-[42px]" />
          <span className="text-[13px]">mm</span>
          <span className="text-[13px]">Y=</span>
          <Spin label="Y" value="0" width="w-[42px]" />
          <span className="text-[13px]">mm</span>
          <span className="h-6 w-px bg-[#999]" />
          <label className="flex items-center gap-2 text-black">
            <input type="checkbox" className="size-[13px] appearance-none border border-[#222] bg-white" />
            旋转
          </label>
          <Spin label="旋转角度" value="0.000" width="w-[52px]" />
          <span className="pr-1">°</span>
        </div>
        <div className={`${BAR} ml-15 gap-px`}>
          <Grip />
          <span className="w-0.5" />
          <Tool icon="ortho" label="正交" />
          <Tool icon="cross" label="交点" />
          <Tool icon="perp" label="垂点" active />
          <Tool icon="mid" label="中点" active />
          <Tool icon="vertex" label="顶点" />
          <Tool icon="coord" label="坐标" />
          <span className="w-0.5" />
        </div>
      </div>
    </main>
  );
}

// floating system monitor
function Monitor() {
  return (
    <div className="absolute right-[137px] top-[14px] z-20 flex items-center">
      <div className="z-10 flex size-[47px] items-center justify-center rounded-full border-2 border-[#e6e6e6] bg-[linear-gradient(#16804f_24%,#5fd879_26%,#3ec455)] font-[family-name:'Liberation_Sans',Arial,sans-serif] text-[14px] text-white shadow-[0_0_2px_1px_#777]">
        73%
      </div>
      <div className="-ml-6 flex h-[38px] w-[103px] items-center gap-1 rounded-r-full border border-[#bbb] bg-[linear-gradient(#fafafa,#ddd)] pl-[27px] text-[10px] leading-[15px] text-black shadow-[1px_2px_4px_#888]">
        <div>
          <p className="whitespace-nowrap"><span className="mr-1.5 font-bold text-[#e5533c]">↑</span>0.04K/s</p>
          <p className="whitespace-nowrap"><span className="mr-1.5 font-bold text-[#1d9a4a]">↓</span>0.04K/s</p>
        </div>
        <svg viewBox="0 0 18 18" className="size-[18px] shrink-0">
          <circle cx="8" cy="10" r="8" fill="#2f7fe0" />
          <path d="M8 6v8M4 10h8" stroke="#fff" strokeWidth="2" />
          <circle cx="14" cy="4" r="3.5" fill="#d8332f" />
        </svg>
      </div>
    </div>
  );
}

const G_SWIRL =
  "M24 4q-4 5-8 3Q9 5 6 11q-2 7 3 12 6 4 12 0 5-4 4-10-2-4-7-4-6 1-5 6 2 4 6 2-2 4-6 2-5-3-3-9 3-6 9-4 5 0 5-2z";

const TASKS: { label: string; run: boolean; art: ReactNode }[] = [
  { label: "Edge", run: false, art: <path d="M5 13q2-9 10-9 9 1 9 11H10q1 6 7 6 4 0 6-2v4q-3 2-8 2-10-1-10-9 0-6 6-8-2 3-2 5h8q0-4-4-4-4 0-7 4z" fill="#0078d7" /> },
  {
    label: "Store", run: false,
    art: <><path d="M4 8l21-2v19L4 22z" fill="#fff" /><path d="M10 8V5q4-4 8 0v3" fill="none" stroke="#fff" strokeWidth="1.5" /><path d="M8 12l5-.5v4.500H8zM14 11l6-1v6h-6zM8 17h5v4.500L8 21zM14 17h6v5.500l-6-1z" fill="#000b0e" /></>,
  },
  { label: "资源管理器", run: false, art: <><path d="M4 6h8l2 2h11v16H4z" fill="#fbe08d" /><path d="M4 6h8l1 3H4z" fill="#e9b949" /><path d="M9 25v-8h12v8h-3v-4h-6v4z" fill="#3ba6dd" /></> },
  { label: "G浏览器", run: true, art: <path d={G_SWIRL} fill="#1e9bf0" stroke="#1e9bf0" /> },
  { label: "G工具", run: true, art: <><path d={G_SWIRL} fill="#1c88b8" stroke="#1c88b8" /><path d="M3 13l4-2 12 12-4 4z" fill="#e63c4b" /></> },
  { label: "360浏览器", run: true, art: <><circle cx="14" cy="15" r="10" fill="#6cc02f" stroke="#e8f4dd" strokeWidth="1.5" /><path d="M9 15h11q0-5-5-5-6 0-6 6 1 5 6 5 3 0 4-2" fill="none" stroke="#fff" strokeWidth="2.5" /><path d="M15 4q7-3 9 2M5 25q3 3 8 1" fill="none" stroke="#3e9120" strokeWidth="2" /></> },
  { label: "云盘", run: true, art: <><rect x="2" y="3" width="24" height="24" rx="4" fill="#0a8ff0" /><path d="M18 9q-4-2-4 2v8q0 4-4 2M6 14q0 2 3 2h10q3 0 3-3M8 17q-1-1 1-1" fill="none" stroke="#fff" strokeWidth="2" strokeLinecap="round" /></> },
  { label: "记事本", run: true, art: <><rect x="2" y="3" width="24" height="24" rx="2" fill="#f39a1f" /><path d="M5 8l12-3 4 16-12 3z" fill="#fff5dc" /><path d="M8 11l7-2M9 14l7-2M10 17l7-2" stroke="#b98544" /><path d="M13 19L23 4l2 2-9 14z" fill="#8a4312" /></> },
  { label: "GCL2013", run: true, art: <><rect x="2" y="3" width="24" height="24" rx="5" fill="#2fc46c" /><path d="M9 9v12M9 15h11M18 12v6M7 9h4M7 21h4" stroke="#fff" strokeWidth="3" /></> },
];

function Taskbar() {
  return (
    <footer className="flex h-10 shrink-0 bg-[#000b0e] text-white">
      <button type="button" aria-label="开始" className="flex w-12 shrink-0 items-center justify-center bg-black">
        <svg viewBox="0 0 16 16" className="size-4" fill="#fff">
          <path d="M0 2l7-1v6.500H0zM8 1l8-1v7.500H8zM0 8.500h7V15l-7-1zM8 8.500h8V16l-8-1z" />
        </svg>
      </button>
      <label className="flex w-[344px] shrink-0 items-center bg-[#333] pl-[9px]">
        <span className="size-[21px] rounded-full border-[3px] border-white" />
        <input aria-label="搜索" placeholder="在这里输入你要搜索的内容" className="ml-1.5 min-w-0 flex-1 bg-transparent text-[14px] outline-none placeholder:text-[#9a9a9a]" />
        <Mic className="mr-3 size-[18px] text-[#999]" strokeWidth={1.2} />
      </label>
      <button type="button" aria-label="四叶" className="ml-0.5 flex w-[49px] shrink-0 items-center justify-center">
        <svg viewBox="0 0 22 22" className="size-[22px]" fill="#e6e6e6">
          <path d="M11 10Q3 12 1 8q-1-5 4-7 5 0 6 9z" />
          <path d="M12 11q-2-8 2-10 5-1 7 4 0 5-9 6z" />
          <path d="M11 12q8-2 10 2 1 5-4 7-5 0-6-9z" />
          <path d="M10 11q2 8-2 10-5 1-7-4 0-5 9-6z" />
        </svg>
      </button>
      <button type="button" aria-label="G" className="flex w-[49px] shrink-0 items-center justify-center">
        <svg viewBox="0 0 28 30" className="h-6 w-[22px]">
          <path d={G_SWIRL} fill="none" stroke="#ccc" strokeWidth="1.5" />
        </svg>
      </button>
      <span className="mx-2 my-3 w-1 shrink-0 border-x border-[#444]" />
      <span className="w-1" />
      {TASKS.map((t) => (
        <button key={t.label} type="button" aria-label={t.label} className="flex w-[49px] shrink-0 flex-col items-center justify-end">
          <svg viewBox="0 0 28 30" className="mb-1 h-[30px] w-7">{t.art}</svg>
          <span className={`h-0.5 w-10 ${t.run ? "bg-[#76b9ed]" : ""}`} />
        </button>
      ))}
      <div className="ml-auto flex shrink-0 items-center">
        <p className="w-16 text-center text-[12px] leading-[17px]">34%<br />CPU使用</p>
        <div className="ml-3 flex items-center gap-[9px]">
          <svg viewBox="0 0 16 14" className="h-3.5 w-4"><path d="M0 0h16v14H0z" fill="#2b3a2b" /><path d="M2 7q5-6 11 0-5 5-11 0zm3 0q2 3 5 0-2-3-5 0z" fill="#76b900" /></svg>
          <svg viewBox="0 0 16 10" className="h-2.5 w-4"><path d="M.5 .5h13v9H.5zM14 3h1.500v4H14" fill="none" stroke="#fff" /><path d="M3 3h5v4H3z" fill="#fff" /></svg>
          <Wifi className="size-4 -rotate-45" strokeWidth={1.5} />
          <Volume2 className="size-[17px]" strokeWidth={1.3} />
          <span className="text-[14px]">中</span>
          <svg viewBox="0 0 16 16" className="ml-1 size-4"><path d="M1 2l14-1v12L1 15z" fill="#f2521b" /><path d="M12 4H5v4h7v4H4" fill="none" stroke="#fff" strokeWidth="2" /></svg>
        </div>
        <p className="ml-3 mr-4 w-16 text-center text-[12px] leading-[18px]">8:01<br />2017/7/21</p>
        <svg viewBox="0 0 24 24" className="mr-4 size-6">
          <path d="M1 2h15v12H6l-4 4v-4H1z" fill="#fff" />
          <path d="M3 5h11M3 8h11M3 11h6" stroke="#000b0e" />
          <circle cx="16" cy="16" r="7.5" fill="#444" />
          <text x="16" y="20.5" textAnchor="middle" fill="#fff" fontSize="12">2</text>
        </svg>
      </div>
    </footer>
  );
}

export default function App() {
  return (
    <div className="relative flex h-screen flex-col overflow-hidden bg-[#f0f0f0] font-[family-name:'Open_Sans','Noto_Sans_CJK_SC',sans-serif] text-[12px] leading-4 text-black">
      <header className="flex h-[22px] shrink-0 items-center bg-white pl-0.5 font-[family-name:'Noto_Sans','Noto_Sans_CJK_SC',sans-serif] text-[#8c8c8c]">
        <svg viewBox="0 0 16 16" className="size-4">
          <rect width="16" height="16" rx="3" fill="#26b565" />
          <path d="M5 4v8M5 8h8M11 6v4M3 4h3M3 12h3" stroke="#fff" strokeWidth="2" />
        </svg>
        <h1 className="ml-[5px] whitespace-nowrap">广联达BIM土建算量软件 GCL2013 - [C:\Users\Administrator.PC-20141127NRHM\Desktop\联城门房.GCL10]</h1>
        <div className="ml-auto flex items-center gap-8 pr-3.5">
          <button type="button" aria-label="最小化"><Minus className="size-3.5" strokeWidth={1.5} /></button>
          <button type="button" aria-label="还原">
            <svg viewBox="0 0 11 11" className="size-[11px]"><path d="M.5 2.500h8v8h-8zM2.500 2.500v-2h8v8h-2" fill="none" stroke="#888" /></svg>
          </button>
          <button type="button" aria-label="关闭"><X className="size-3.5" strokeWidth={1.5} /></button>
        </div>
      </header>
      <div className="flex h-[31px] shrink-0 justify-between bg-white text-[#6d6d6d]">
        <nav className="flex items-center gap-[11px] border-b border-r border-[#c6c6c6] pr-1 font-[family-name:'Noto_Sans','Noto_Sans_CJK_SC',sans-serif]">
          <Grip />
          <span className="-mr-[15px]" />
          {MENU.map((m) => <button key={m} type="button" className="whitespace-nowrap">{m}</button>)}
          <button type="button" className="-ml-0.5 flex items-center gap-1 whitespace-nowrap">
            <svg viewBox="0 0 16 16" className="size-4">
              <path d="M3 3l2 1q3-2 6 0l2-1 1 3q1 1 1 3l-2 1q-1 5-5 5t-5-5L1 9q0-2 1-3z" fill="#3fa5ea" />
              <circle cx="8" cy="8" r="4" fill="#bfe4fb" />
              <circle cx="6.5" cy="7.5" r="0.8" fill="#1b5c93" />
              <circle cx="9.5" cy="7.5" r="0.8" fill="#1b5c93" />
              <path d="M6.500 10q1.500 1 3 0" stroke="#1b5c93" fill="none" />
            </svg>
            广小二
          </button>
        </nav>
        <div className="flex items-center border-b border-r border-[#c6c6c6] pr-[5px] text-black">
          <a href="#beans">造价豆:0</a>
          <svg viewBox="0 0 14 16" className="ml-2 h-4 w-3.5"><path d="M1 12q2-2 2-6 0-4 4-4t4 4q0 4 2 6z" fill="#3f8fe8" /><path d="M6 0h2v2H6zM5 13h4v2H5z" fill="#3f8fe8" /></svg>
          <svg viewBox="0 0 16 15" className="ml-2 h-[15px] w-4"><path d="M.5 1.500h15v9h-3v3l-3-3h-9z" fill="#fff" stroke="#4c91dd" /><path d="M3 6.500h10" stroke="#4c91dd" strokeDasharray="2 2" /></svg>
          <a href="#feedback" className="ml-1">我要建议</a>
        </div>
      </div>
      <div className="flex h-[29px] shrink-0 border-b border-[#d6d6d6] bg-white">
        <div className="flex items-center gap-px border-r border-[#c6c6c6]">
          <Grip />
          <Tool icon="newFile" />
          <span className="w-px" />
          <Tool icon="open" arrow />
          <Tool icon="save" />
          <Sep />
          <Tool icon="undo" arrow />
          <Tool icon="redo" arrow />
        </div>
        <div className="ml-[13px] flex items-center gap-px border-r border-[#c6c6c6]">
          <Grip />
          <Tool icon="define" label="定义" />
          <Sep />
          <Tool icon="sigma" label="汇总计算" />
          <Tool icon="cloud" label="云检查" />
          <Sep />
          <Tool icon="glasses" label="查看工程量" />
          <Tool icon="calc" label="查看计算式" />
          <Tool icon="batch" label="批量选择" />
          <Tool icon="slab" label="平齐板顶" />
        </div>
        <div className="flex items-center gap-px border-r border-[#c6c6c6] pr-0.5">
          <Grip />
          <span className="w-0.5" />
          <Combo label="显示范围" value="当前楼层" width="w-[79px]" />
          <span className="w-px" />
          <Tool icon="cube" label="俯视" arrow />
          <Tool icon="threeD" label="三维" />
          <Tool icon="part3d" label="局部三维" />
          <Sep />
          <Tool icon="full" label="全屏" />
          <Tool icon="zoom" label="缩放" arrow />
          <Tool icon="pan" label="平移" arrow />
          <Tool icon="rotateView" label="屏幕旋转" arrow />
          <Sep />
          <Tool icon="viewSet" label="构件图元显示设置" />
        </div>
      </div>
      <Monitor />
      <div className="flex min-h-0 flex-1 pt-0.5">
        <ModulePanel />
        <span className="w-[5px] shrink-0" />
        <PartPanel />
        <span className="w-[3px] shrink-0" />
        <Workspace />
      </div>
      <div className="flex h-[22px] shrink-0 items-center border-t border-[#d6d6d6]">
        {[
          ["w-[150px]", "X=17664 Y=13590"],
          ["w-20", "层高:3m"],
          ["w-[130px]", "建筑底标高:-0.05m"],
          ["w-[50px]", "0"],
          ["w-[250px]", ""],
          ["min-w-0 flex-1", ""],
          ["w-[70px]", "757.1FPS"],
          ["w-[150px]", ""],
        ].map(([w, t], i) => (
          <span key={i} className={`h-[18px] whitespace-nowrap border-r border-[#d0d0d0] pl-px leading-[18px] ${w}`}>
            <Mono text={t} />
          </span>
        ))}
      </div>
      <Taskbar />
    </div>
  );
}
